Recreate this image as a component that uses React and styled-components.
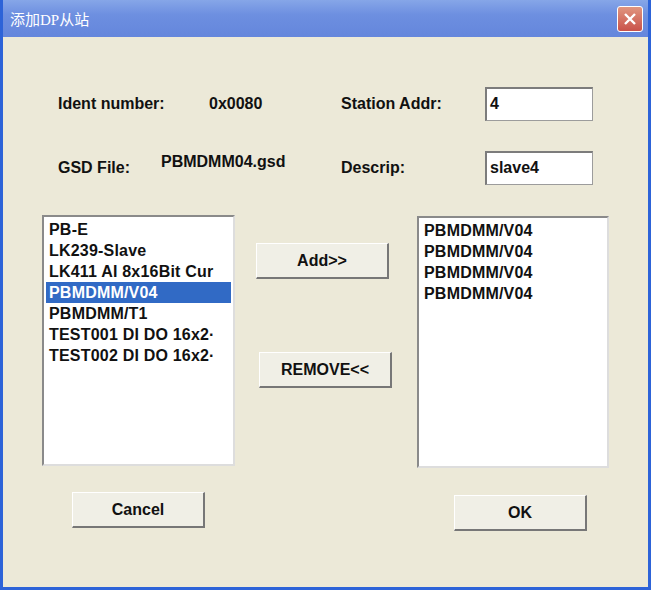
import React from 'react'
import styled, { createGlobalStyle } from 'styled-components'

const Global = createGlobalStyle`
  html, body { margin: 0; padding: 0; background: #ece9d8; }
  * { box-sizing: border-box; }
`

const Window = styled.div`
  width: 651px;
  height: 590px;
  display: flex;
  flex-direction: column;
  background: #0a3fd0;
  border: 3px solid #2d63d8;
  border-top: none;
  font-family: 'Liberation Sans', Arial, sans-serif;
  font-weight: bold;
  font-size: 16px;
  color: #111;
`

const TitleBar = styled.div`
  height: 37px;
  flex: none;
  display: flex;
  align-items: center;
  justify-content: space-between;
  padding: 0 5px 0 7px;
  background: linear-gradient(#86a6e8, #6d8fe0 40%, #6486dc);
  color: #fff;
  font-family: 'Liberation Serif', 'Noto Sans CJK SC', serif;
  font-weight: normal;
  font-size: 15px;
`

const CloseButton = styled.div`
  width: 26px;
  height: 26px;
  border: 1px solid #fff;
  border-radius: 3px;
  background: linear-gradient(#e0957f, #c9524a);
  display: flex;
  align-items: center;
  justify-content: center;
`

const Body = styled.div`
  flex: 1;
  background: #ece9d8;
  padding: 50px 0 0 39px;
`

const InfoRow = styled.div`
  display: grid;
  grid-template-columns: 103px 179px 161px 108px;
  align-items: center;
  height: 34px;
  white-space: nowrap;
  margin-bottom: ${p => p.$gap || 0}px;
`

const Label = styled.span`
  padding-left: ${p => p.$pl ?? 16}px;
  margin-top: ${p => p.$dy || 0}px;
`

const Field = styled.div`
  height: 34px;
  background: #fff;
  border: 1px solid #9c9c9c;
  border-top: 2px solid #7c7c7c;
  border-left: 2px solid #7c7c7c;
  padding: 6px 3px;
`

const Middle = styled.div`
  display: flex;
  margin-top: 30px;
`

const ListBox = styled.div`
  width: ${p => p.$w}px;
  height: ${p => p.$h}px;
  margin-top: ${p => p.$dy || 0}px;
  background: #fff;
  border: 2px solid #8a8a8a;
  border-right-color: #ddd;
  border-bottom-color: #ddd;
  padding: 2px 2px;
  overflow: hidden;
  white-space: nowrap;
`

const Item = styled.div`
  height: 21px;
  line-height: 21px;
  padding-left: 3px;
  font-size: 16px;
  letter-spacing: 0.2px;
  background: ${p => (p.$sel ? '#316ac5' : 'transparent')};
  color: ${p => (p.$sel ? '#fff' : '#111')};
`

const Buttons = styled.div`
  display: flex;
  flex-direction: column;
  width: 182px;
  padding: 28px 0 0 21px;
  gap: 73px;
`

const Button = styled.div`
  width: 133px;
  height: 36px;
  margin-left: ${p => p.$dx || 0}px;
  margin-top: ${p => p.$dy || 0}px;
  background: #f0efe6;
  border: 1px solid #fff;
  border-right: 2px solid #777;
  border-bottom: 2px solid #777;
  display: flex;
  align-items: center;
  justify-content: center;
`

const Footer = styled.div`
  display: flex;
  padding-left: 30px;
  margin-top: 24px;
`

const leftItems = ['PB-E', 'LK239-Slave', 'LK411 AI 8x16Bit Cur', 'PBMDMM/V04', 'PBMDMM/T1', 'TEST001 DI DO 16x2·', 'TEST002 DI DO 16x2·']

export default function App() {
  return (
    <>
      <Global />
      <Window>
        <TitleBar>
          <span>添加DP从站</span>
          <CloseButton>
            <svg width="14" height="14" viewBox="0 0 14 14">
              <path d="M2 2 L12 12 M12 2 L2 12" stroke="#fff" strokeWidth="2.4" />
            </svg>
          </CloseButton>
        </TitleBar>
        <Body>
          <InfoRow $gap={30}>
            <Label>Ident number:</Label>
            <Label $pl={64}>0x0080</Label>
            <Label $pl={17}>Station Addr:</Label>
            <Field>4</Field>
          </InfoRow>
          <InfoRow>
            <Label>GSD File:</Label>
            <Label $pl={16} $dy={-12}>PBMDMM04.gsd</Label>
            <Label $pl={17}>Descrip:</Label>
            <Field>slave4</Field>
          </InfoRow>
          <Middle>
            <ListBox $w={193} $h={251}>
              {leftItems.map((t, i) => (
                <Item key={i} $sel={i === 3}>{t}</Item>
              ))}
            </ListBox>
            <Buttons>
              <Button>Add&gt;&gt;</Button>
              <Button $dx={3}>REMOVE&lt;&lt;</Button>
            </Buttons>
            <ListBox $w={192} $h={252} $dy={1}>
              {[0, 1, 2, 3].map(i => (
                <Item key={i}>PBMDMM/V04</Item>
              ))}
            </ListBox>
          </Middle>
          <Footer>
            <Button>Cancel</Button>
            <Button $dx={249} $dy={3}>OK</Button>
          </Footer>
        </Body>
      </Window>
    </>
  )
}
